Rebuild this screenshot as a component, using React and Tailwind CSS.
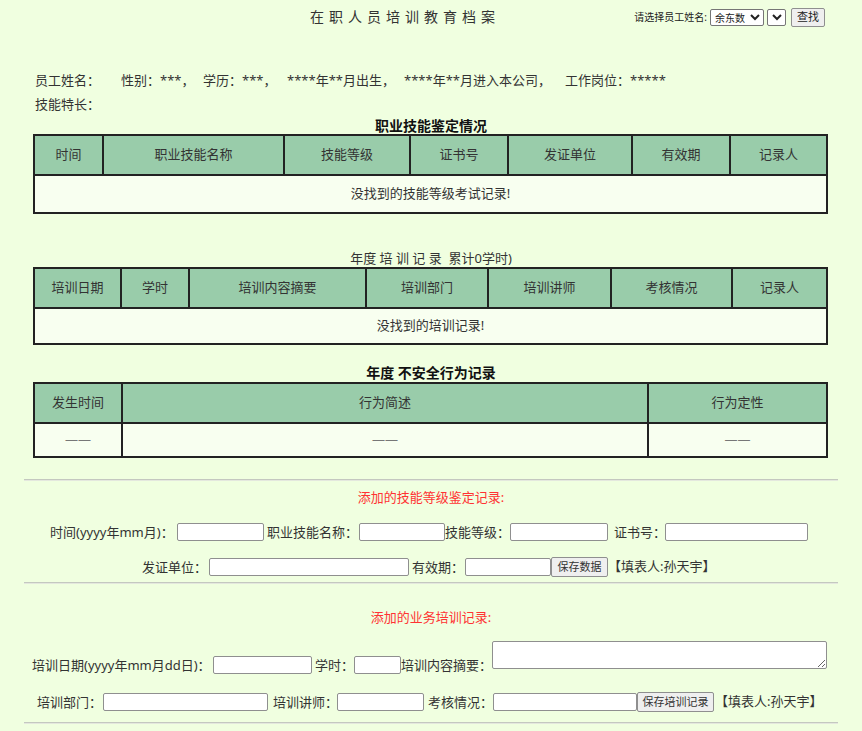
import { useState } from 'react'

const skillCols = [
  { w: 'w-[69px]', t: '时间' },
  { w: 'w-[181px]', t: '职业技能名称' },
  { w: 'w-[126px]', t: '技能等级' },
  { w: 'w-[98px]', t: '证书号' },
  { w: 'w-[124px]', t: '发证单位' },
  { w: 'w-[98px]', t: '有效期' },
  { w: '', t: '记录人' },
]

const trainCols = [
  { w: 'w-[87px]', t: '培训日期' },
  { w: 'w-[68px]', t: '学时' },
  { w: 'w-[177px]', t: '培训内容摘要' },
  { w: 'w-[122px]', t: '培训部门' },
  { w: 'w-[123px]', t: '培训讲师' },
  { w: 'w-[121px]', t: '考核情况' },
  { w: '', t: '记录人' },
]

const unsafeCols = [
  { w: 'w-[88px]', t: '发生时间' },
  { w: 'w-[526px]', t: '行为简述' },
  { w: '', t: '行为定性' },
]

function RecordTable({ cols, children, headH = 'h-[40px]' }) {
  return (
    <table className="ml-[33px] w-[795px] table-fixed border-collapse border-2 border-[#222] text-[13px]">
      <colgroup>
        {cols.map((c, i) => <col key={i} className={c.w} />)}
      </colgroup>
      <thead>
        <tr className={headH}>
          {cols.map((c, i) => (
            <th key={i} className="border-2 border-[#222] bg-[#99ccaa] font-normal text-[#333] text-center">{c.t}</th>
          ))}
        </tr>
      </thead>
      <tbody>{children}</tbody>
    </table>
  )
}

function Field({ className = '' }) {
  return <input type="text" className={`h-[18px] border border-[#8f8f8f] rounded-[2px] bg-white px-1 text-[13px] ${className}`} />
}

function Label({ className = '', children }) {
  return <span className={`text-right whitespace-nowrap leading-[18px] ${className}`}>{children}</span>
}

function SaveButton({ className = '', children }) {
  return (
    <button className={`h-[20px] border border-[#8f8f8f] rounded-[2px] bg-[#efefef] text-[11px] text-[#333] leading-[18px] ${className}`}>
      {children}
    </button>
  )
}

export default function App() {
  const [name, setName] = useState('余东数')

  return (
    <div className="min-h-screen w-[862px] bg-[#f0ffe0] text-[#333] font-['Noto_Sans','Noto_Sans_CJK_SC',sans-serif]">
      {/* header */}
      <div className="flex h-[36px] items-start">
        <div className="pl-[310px] pt-[8px] text-[14px] leading-[18px] tracking-[5px] text-[#333]">在职人员培训教育档案</div>
        <div className="ml-auto mr-[37px] mt-[8px] flex items-center text-[10px] text-[#222]">
          <span className="mr-[3px]">请选择员工姓名:</span>
          <select value={name} onChange={e => setName(e.target.value)} className="h-[17px] w-[54px] border border-[#767676] rounded-[2px] bg-white pl-0 text-[10px] mr-[3px]">
            <option>余东数</option>
          </select>
          <select className="h-[17px] w-[19px] border border-[#767676] rounded-[2px] bg-white text-[10px] mr-[5px]">
            <option></option>
          </select>
          <button className="h-[19px] w-[34px] border border-[#8f8f8f] rounded-[2px] bg-[#efefef] text-[11px]">查找</button>
        </div>
      </div>

      {/* info */}
      <div className="mt-[32px] pl-[35px] text-[13px] leading-[24px]">
        <div className="flex whitespace-nowrap">
          <span className="w-[86px]">员工姓名：</span>
          <span className="w-[82px]">性别：***，</span>
          <span className="w-[84px]">学历：***，</span>
          <span className="w-[117px]">****年**月出生，</span>
          <span className="w-[161px]">****年**月进入本公司，</span>
          <span>工作岗位：*****</span>
        </div>
        <div>技能特长：</div>
      </div>

      <div className="h-[18px] text-center text-[14px] font-bold leading-[20px] text-[#111]">职业技能鉴定情况</div>
      <RecordTable cols={skillCols}>
        <tr className="h-[38px] bg-[#f8fff0]">
          <td colSpan={7} className="border-2 border-[#222] text-center">没找到的技能等级考试记录!</td>
        </tr>
      </RecordTable>

      <div className="mt-[35px] h-[18px] text-center text-[13px] leading-[18px]">年度 培 训 记 录&nbsp;&nbsp;累计0学时)</div>
      <RecordTable cols={trainCols}>
        <tr className="h-[36px] bg-[#f8fff0]">
          <td colSpan={7} className="border-2 border-[#222] text-center">没找到的培训记录!</td>
        </tr>
      </RecordTable>

      <div className="mt-[19px] h-[18px] text-center text-[14px] font-bold leading-[18px] text-[#111]">年度 不安全行为记录</div>
      <RecordTable cols={unsafeCols} headH="h-[40px]">
        <tr className="h-[34px] bg-[#f8fff0] text-[#777]">
          <td className="border-2 border-[#222] text-center">——</td>
          <td className="border-2 border-[#222] text-center">——</td>
          <td className="border-2 border-[#222] text-center">——</td>
        </tr>
      </RecordTable>

      {/* add skill record */}
      <div className="mx-[24px] mt-[21px] h-[2px] border-t border-b border-t-[#c4c8c0] border-b-[#e4e8de]" />
      <div className="mt-[7px] h-[18px] text-center text-[13px] leading-[18px] text-[#ff3333]">添加的技能等级鉴定记录:</div>

      <div className="mt-[17px] flex items-center pl-[50px] text-[13px]">
        <Label className="w-[122px]">时间(yyyy年mm月)：</Label>
        <Field className="ml-[5px] w-[87px]" />
        <Label className="ml-[3px] w-[87px]">职业技能名称：</Label>
        <Field className="ml-[5px] w-[86px]" />
        <Label className="w-[61px]">技能等级：</Label>
        <Field className="ml-[4px] w-[98px]" />
        <Label className="ml-[6px] w-[46px]">证书号：</Label>
        <Field className="ml-[5px] w-[143px]" />
      </div>

      <div className="mt-[16px] flex items-center pl-[142px] text-[13px]">
        <Label className="w-[63px]">发证单位：</Label>
        <Field className="ml-[4px] w-[200px]" />
        <Label className="ml-[3px] w-[50px]">有效期：</Label>
        <Field className="ml-[3px] w-[86px]" />
        <SaveButton className="w-[57px]">保存数据</SaveButton>
        <span className="ml-[0px] whitespace-nowrap">【填表人:孙天宇】</span>
      </div>

      <div className="mx-[24px] mt-[5px] h-[2px] border-t border-b border-t-[#c4c8c0] border-b-[#e4e8de]" />

      {/* add training record */}
      <div className="mt-[24px] h-[18px] text-center text-[13px] leading-[18px] text-[#ff3333]">添加的业务培训记录:</div>

      <div className="mt-[15px] flex items-end pl-[32px] text-[13px]">
        <Label className="w-[177px]">培训日期(yyyy年mm月dd日)：</Label>
        <Field className="ml-[4px] w-[99px]" />
        <Label className="ml-[3px] w-[36px]">学时：</Label>
        <Field className="ml-[3px] w-[47px]" />
        <Label className="w-[86px]">培训内容摘要：</Label>
        <textarea className="mb-[5px] ml-[5px] h-[28px] w-[335px] border border-[#8f8f8f] rounded-[2px] bg-white" />
      </div>

      <div className="mt-[18px] flex items-center pl-[37px] text-[13px]">
        <Label className="w-[62px]">培训部门：</Label>
        <Field className="ml-[4px] w-[165px]" />
        <Label className="ml-[5px] w-[60px]">培训讲师：</Label>
        <Field className="ml-[4px] w-[87px]" />
        <Label className="ml-[4px] w-[61px]">考核情况：</Label>
        <Field className="ml-[4px] w-[144px]" />
        <SaveButton className="w-[77px]">保存培训记录</SaveButton>
        <span className="ml-[1px] whitespace-nowrap">【填表人:孙天宇】</span>
      </div>

      <div className="mx-[24px] mt-[10px] h-[2px] border-t border-b border-t-[#c4c8c0] border-b-[#e4e8de]" />
      <div className="h-[8px]" />
    </div>
  )
}
